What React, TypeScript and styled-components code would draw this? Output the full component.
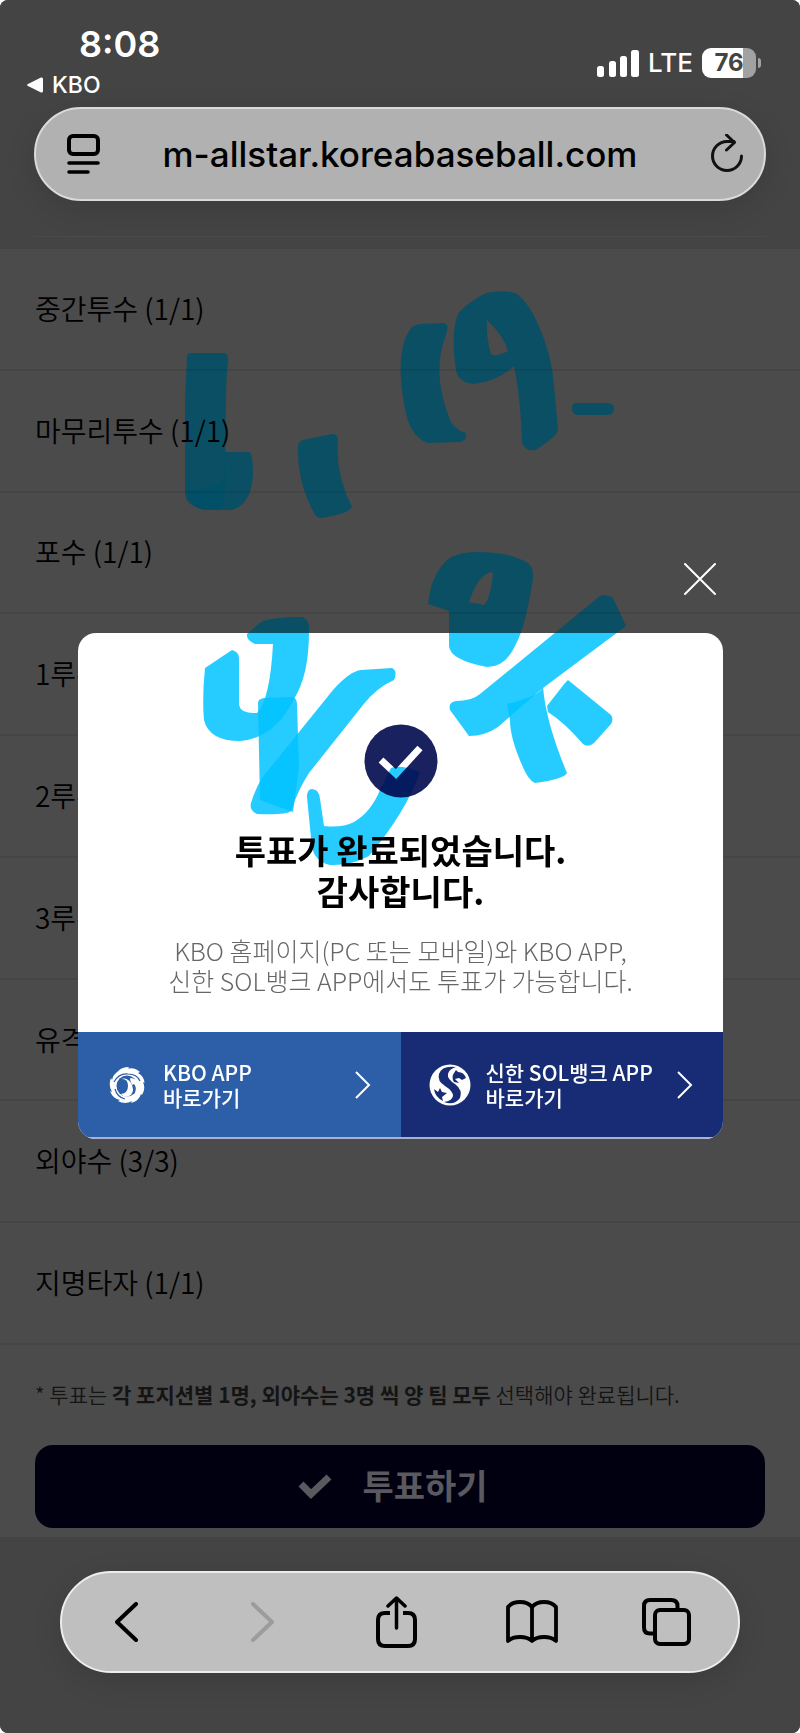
import React from 'react';
import styled, { createGlobalStyle } from 'styled-components';

const GlobalStyle = createGlobalStyle`
  *, *::before, *::after { box-sizing: border-box; }
  body { margin: 0; background: #fff; }
  button { margin: 0; padding: 0; border: 0; background: none; font: inherit; color: inherit; cursor: pointer; }
  a { color: inherit; text-decoration: none; }
  svg { display: block; flex: none; }
`;

const ui = `'Inter', 'Noto Sans CJK KR', sans-serif`;
const korean = `'Noto Sans CJK KR', sans-serif`;

const Screen = styled.div`
  position: relative;
  display: flex;
  flex-direction: column;
  min-height: 100vh;
  overflow: hidden;
  border-radius: 8px;
  background: #4b4b4b;
  font-family: ${korean};
`;

const Header = styled.header`
  display: flex;
  flex-direction: column;
  height: 249px;
  padding: 0 34px;
  background: #444;
  color: #fff;
  font-family: ${ui};
`;

const StatusBar = styled.div`
  display: flex;
  justify-content: space-between;
  height: 107px;
`;

const StatusLeft = styled.div`
  display: flex;
  flex-direction: column;
  padding-top: 24px;
`;

const Clock = styled.time`
  padding-left: 45px;
  font-size: 36px;
  line-height: 40px;
  font-weight: 600;
`;

const BackLink = styled.a`
  display: flex;
  align-items: center;
  gap: 9px;
  margin-left: -7px;
  font-size: 23px;
  line-height: 42px;
  font-weight: 500;
`;

const StatusRight = styled.div`
  display: flex;
  align-items: center;
  gap: 9px;
  height: 38px;
  margin-top: 44px;
  padding-right: 5px;
`;

const Network = styled.span`
  font-size: 26px;
  line-height: 38px;
  font-weight: 500;
`;

const Battery = styled.div`
  display: flex;
  align-items: center;
  gap: 2px;
`;

const BatteryBody = styled.div`
  width: 54px;
  height: 30px;
  border-radius: 9px;
  background: linear-gradient(90deg, #fff 76%, #a2a2a2 76%);
  color: #444;
  font-size: 24px;
  line-height: 30px;
  font-weight: 700;
  text-align: center;
`;

const BatteryCap = styled.div`
  width: 3px;
  height: 10px;
  border-radius: 0 3px 3px 0;
  background: #a2a2a2;
`;

const AddressBar = styled.div`
  display: flex;
  align-items: center;
  height: 94px;
  border: 2px solid #dadada;
  border-radius: 47px;
  background: #b1b1b1;
  box-shadow: 0 8px 30px rgba(0, 0, 0, 0.12);
  color: #000;
`;

const AddressButton = styled.button<{ $width: number }>`
  display: grid;
  place-items: center;
  width: ${(p) => p.$width}px;
  height: 90px;
`;

const Address = styled.span`
  flex: 1;
  padding-right: 20px;
  font-size: 35px;
  line-height: 40px;
  font-weight: 500;
  text-align: center;
`;

const HeaderRule = styled.div`
  height: 1px;
  margin-top: 35px;
  background: #4a4a4a;
`;

const Positions = styled.ul`
  position: relative;
  z-index: 1;
  display: flex;
  flex: 1;
  flex-direction: column;
  margin: 0;
  padding: 0;
  list-style: none;
`;

const Position = styled.li`
  display: flex;
  flex: 1 0 100px;
  align-items: center;
  padding: 0 35px 2px;
  border-bottom: 2px solid rgba(0, 0, 0, 0.08);
  color: #000;
  font-size: 28px;
  line-height: 40px;
  font-weight: 350;
`;

const VoteArea = styled.section`
  padding: 33px 35px 9px;
`;

const Note = styled.p`
  margin: 0 0 35px;
  color: #141414;
  font-size: 21px;
  line-height: 32px;
  font-weight: 350;
  b { font-weight: 700; }
`;

const VoteButton = styled.button`
  display: flex;
  align-items: center;
  justify-content: center;
  gap: 30px;
  width: 100%;
  height: 83px;
  padding: 0 14px 4px 0;
  border-radius: 18px;
  background: #000010;
  color: #59595f;
  font-size: 34px;
  line-height: 40px;
  font-weight: 700;
`;

const BrowserBar = styled.nav`
  padding: 34px 60px 60px;
  background: #444;
`;

const BrowserPill = styled.div`
  display: flex;
  align-items: center;
  justify-content: space-between;
  height: 102px;
  padding: 0 36px 0 30px;
  border: 2px solid #ededed;
  border-radius: 51px;
  background: #bfbfbf;
  box-shadow: 0 8px 30px rgba(0, 0, 0, 0.12);
`;

const BarButton = styled.button`
  display: grid;
  place-items: center;
  width: 70px;
  height: 70px;
`;

const Overlay = styled.div`
  position: absolute;
  inset: 0;
  z-index: 2;
  display: flex;
  flex-direction: column;
  align-items: center;
  padding: 554px 77px 0 78px;
`;

const Dialog = styled.div`
  display: flex;
  flex-direction: column;
  width: 100%;
  max-width: 645px;
`;

const CloseButton = styled.button`
  display: grid;
  place-items: center;
  align-self: flex-end;
  width: 46px;
  height: 50px;
  margin-bottom: 29px;
`;

const Card = styled.div`
  position: relative;
  overflow: hidden;
  border-radius: 18px;
  background: #fff;
  isolation: isolate;
`;

const CardBody = styled.div`
  display: flex;
  flex-direction: column;
  align-items: center;
  height: 399px;
  padding-top: 91px;
  text-align: center;
`;

const Title = styled.h1`
  margin: 31px 0 0;
  color: #000;
  font-size: 34px;
  line-height: 41px;
  font-weight: 700;
`;

const Message = styled.p`
  margin: 24px 0 0;
  color: #666;
  font-size: 25px;
  line-height: 30px;
  font-weight: 300;
`;

const Actions = styled.div`
  display: grid;
  grid-template-columns: 1fr 1fr;
  border-bottom: 2px solid #a8b2cc;
`;

const Action = styled.a<{ $tone: string }>`
  display: flex;
  align-items: center;
  height: 105px;
  padding: 0 30px 0 28px;
  background: ${(p) => p.$tone};
  color: #fff;
  font-size: 21px;
  line-height: 25px;
  font-weight: 500;
`;

const LogoSlot = styled.span`
  display: grid;
  place-items: center;
  width: 42px;
`;

const ActionLabel = styled.span`
  flex: 1;
  padding-left: 15px;
  white-space: nowrap;
`;

const PageInk = styled.svg`
  position: absolute;
  top: 0;
  left: 0;
  width: 100%;
  height: auto;
  pointer-events: none;
`;

const CardInk = styled.svg`
  position: absolute;
  top: 0;
  left: 0;
  width: 100%;
  height: auto;
  pointer-events: none;
  mix-blend-mode: multiply;
`;

/* Marker strokes, each one a filled outline in the coordinates of the 800-wide page. */
const upperInk = [
  'M187 357Q187 353 191 353L224 353Q228 353 228 359Q226 380 226 400L225 470Q226 509 218 509L203 509Q185 506 185 492L185 400Z',
  'M187 490Q190 508 204 510L232 510Q251 505 253 475Q253 452 249 452L225 452L224 480Q210 490 187 490Z',
  'M298 446Q298 442 303 440L332 434Q338 434 338 440Q335 473 352 507Q350 513 322 518Q316 518 314 513Q297 482 298 446Z',
  'M411 328Q414 325 420 324L443 323Q450 323 446 335Q431 372 450 420Q455 430 466 433Q468 440 460 442L428 443Q412 438 406 414Q393 352 411 328Z',
  'M486 293Q506 289 517 294Q528 302 538 324Q552 355 554 385L558 430Q557 436 536 450Q526 452 522 443Q521 400 514 366Q497 382 473 384Q458 382 456 370Q450 330 459 312Q473 299 486 293ZM487 320Q486 337 491 354Q494 358 508 351Q504 336 487 320Z',
  'M575 403L609 403Q614 404 614 409Q614 414 608 415L577 415Q572 414 572 409Q572 404 575 403Z',
];

const lowerInk = [
  'M428 604Q431 575 447 560Q457 552 477 552Q509 552 528 563Q534 568 533 578Q526 625 516 644Q506 667 487 667Q450 660 449 646L449 611ZM493 572Q479 572 469 602L484 605Q491 598 493 572Z',
  'M600 596Q606 593 613 598L626 626L543 688Q515 712 498 727Q485 736 469 736L450 710Q448 702 456 701Q472 701 480 694Z',
  'M507 704Q540 696 543 687Q546 723 567 773Q564 779 535 783Q528 780 522 765Q510 738 510 720Z',
  'M568 680L611 715Q614 719 611 724L594 743Q588 748 583 744Q565 723 548 712L547 706L565 683Z',
  'M261 622Q272 617 302 617Q310 619 309 632Q309 675 294 699Q275 738 240 741Q209 741 204 720Q202 697 205 668L232 650Q239 652 239 658L239 705Q241 714 257 713Q270 700 273 644L255 644Q246 640 247 634Z',
  'M258 703Q258 699 264 698L292 697Q297 698 297 704L299 768L293 812L260 800Z',
  'M361 670L392 668Q398 671 394 680Q376 688 363 705L309 773Q298 790 291 811Q287 815 257 814Q249 810 251 803Q258 780 270 768L333 690Q350 671 361 670Z',
  'M312 789Q319 789 320 799L324 826Q342 828 354 822Q371 812 380 790L391 768Q400 764 420 772Q406 812 369 856Q350 866 330 865Q311 861 311 838L307 797Q307 789 312 789Z',
];

function InkPaths({ color, paths }: { color: string; paths: string[] }) {
  return (
    <g fill={color} fillOpacity={0.85} fillRule="evenodd">
      {paths.map((d) => (
        <path key={d} d={d} />
      ))}
    </g>
  );
}

function PageMarker() {
  return (
    <PageInk viewBox="0 0 800 1733" aria-hidden="true">
      <InkPaths color="#005068" paths={[...upperInk, ...lowerInk]} />
    </PageInk>
  );
}

function CardMarker() {
  return (
    <CardInk viewBox="78 633 645 506" aria-hidden="true">
      <InkPaths color="#00c3ff" paths={lowerInk} />
    </CardInk>
  );
}

function ReaderIcon() {
  return (
    <svg width="34" height="40" viewBox="0 0 34 40" fill="none" stroke="#000" strokeWidth="4" strokeLinecap="round">
      <rect x="2" y="2" width="29" height="18" rx="4" />
      <path d="M2 29h29M2 38h19" strokeWidth="3.6" />
    </svg>
  );
}

function ReloadIcon() {
  return (
    <svg width="32" height="40" viewBox="0 0 32 40" fill="none" stroke="#111" strokeWidth="3" strokeLinecap="round" strokeLinejoin="round">
      <path d="M30.500 22A14.500 14.500 0 1 1 16 7.500H23" />
      <path d="M15.500 1l8 7.500-8 7.500" />
    </svg>
  );
}

function SignalIcon() {
  return (
    <svg width="42" height="27" viewBox="0 0 42 27" fill="#fff">
      <rect x="0" y="16" width="7" height="11" rx="2.500" />
      <rect x="12" y="11" width="7" height="16" rx="2.500" />
      <rect x="23" y="6" width="7" height="21" rx="2.500" />
      <rect x="34" y="0" width="8" height="27" rx="2.500" />
    </svg>
  );
}

function KboLogo() {
  return (
    <svg width="38" height="38" viewBox="0 0 38 38" fill="#fff">
      <path d="M10 5Q14 1 21 1L20 2.500Q27 1 32 6L30 7Q36 10 36.500 17L35 16Q38 23 34 29L33 28Q31 35 23 37L24 35Q17 39 10 35L12 34Q5 33 2 25L4 26Q0 19 3 12L4 14Q5 8 12 4Z" />
      <circle cx="19" cy="20" r="10.500" fill="#2d5fa8" />
      <path d="M13 13Q20 12 20 20Q20 27 13 28Q17 33 23 29Q27 24 23 17Q19 11 13 13Z" />
      <path d="M22 12Q30 12 30 20Q30 25 27 27Q29 21 26 18L24 19Q22 15 22 12Z" />
      <path d="M6 16Q11 7 20 8Q29 8 32 15" fill="none" stroke="#2d5fa8" strokeWidth="1.200" />
      <path d="M7 23Q9 31 17 33" fill="none" stroke="#2d5fa8" strokeWidth="1.200" />
    </svg>
  );
}

function ShinhanLogo() {
  return (
    <svg width="42" height="42" viewBox="0 0 42 42" fill="#172c75">
      <circle cx="21" cy="21" r="20.500" fill="#fff" />
      <path d="M27 3Q13 1 10 10Q8 17 16 22Q24 27 24 32Q23 37 15 38Q25 42 31 34Q34 26 26 20Q18 15 19 10Q20 5 27 3Z" />
      <path d="M25 9L27 6L29 8Q35 8 37 14L33 16L30 14L26 15L30 19L25 18Q22 13 25 9Z" />
      <path d="M5 25L9 28L11 24L13 28L18 29L13 33L14 37Q6 33 5 25Z" />
    </svg>
  );
}

function Chevron() {
  return (
    <svg width="16" height="28" viewBox="0 0 16 28" fill="none" stroke="#fff" strokeWidth="2">
      <path d="M1 1l13 13L1 27" />
    </svg>
  );
}

const positions = [
  '중간투수 (1/1)',
  '마무리투수 (1/1)',
  '포수 (1/1)',
  '1루수 (1/1)',
  '2루수 (1/1)',
  '3루수 (1/1)',
  '유격수 (1/1)',
  '외야수 (3/3)',
  '지명타자 (1/1)',
];

export default function App() {
  return (
    <>
      <GlobalStyle />
      <Screen>
        <Header>
          <StatusBar>
            <StatusLeft>
              <Clock>8:08</Clock>
              <BackLink href="#kbo">
                <svg width="16" height="16" viewBox="0 0 16 16" fill="#fff">
                  <path d="M1 7L14 .5Q16 0 16 2V14Q16 16 14 15.500L1 9Q-1 8 1 7Z" />
                </svg>
                KBO
              </BackLink>
            </StatusLeft>
            <StatusRight>
              <SignalIcon />
              <Network>LTE</Network>
              <Battery>
                <BatteryBody>76</BatteryBody>
                <BatteryCap />
              </Battery>
            </StatusRight>
          </StatusBar>
          <AddressBar>
            <AddressButton $width={95} aria-label="Page menu"><ReaderIcon /></AddressButton>
            <Address>m-allstar.koreabaseball.com</Address>
            <AddressButton $width={75} aria-label="Reload"><ReloadIcon /></AddressButton>
          </AddressBar>
          <HeaderRule />
        </Header>

        <PageMarker />

        <Positions>
          {positions.map((label) => (
            <Position key={label}>{label}</Position>
          ))}
        </Positions>

        <VoteArea>
          <Note>
            * 투표는 <b>각 포지션별 1명, 외야수는 3명 씩 양 팀 모두</b> 선택해야 완료됩니다.
          </Note>
          <VoteButton>
            <svg width="34" height="30" viewBox="0 -4 34 30" fill="none" stroke="#59595f" strokeWidth="7">
              <path d="M3 10l10 10L31 3" />
            </svg>
            투표하기
          </VoteButton>
        </VoteArea>

        <BrowserBar>
          <BrowserPill>
            <BarButton aria-label="Back">
              <svg width="24" height="40" viewBox="0 0 24 40" fill="none" stroke="#000" strokeWidth="4" strokeLinecap="round" strokeLinejoin="round">
                <path d="M21 2L2 20l19 18" />
              </svg>
            </BarButton>
            <BarButton aria-label="Forward">
              <svg width="24" height="40" viewBox="0 0 24 40" fill="none" stroke="#9c9c9c" strokeWidth="4" strokeLinecap="round" strokeLinejoin="round">
                <path d="M3 2l19 18L3 38" />
              </svg>
            </BarButton>
            <BarButton aria-label="Share">
              <svg width="42" height="52" viewBox="0 0 42 52" fill="none" stroke="#000" strokeWidth="4" strokeLinecap="round" strokeLinejoin="round">
                <path d="M14 17H9Q2 17 2 24V43Q2 50 9 50H32Q39 50 39 43V24Q39 17 32 17H27" strokeLinecap="butt" />
                <path d="M20.500 32V2M12 10l8.500-8 8.500 8" strokeWidth="3.500" />
              </svg>
            </BarButton>
            <BarButton aria-label="Bookmarks">
              <svg width="52" height="44" viewBox="0 0 52 44" fill="none" stroke="#000" strokeWidth="3.800" strokeLinejoin="round">
                <path d="M26 7Q22 2 14 2Q6 2 2 7V41Q6 37 14 37Q22 37 26 41Q30 37 38 37Q46 37 50 41V7Q46 2 38 2Q30 2 26 7V41" />
              </svg>
            </BarButton>
            <BarButton aria-label="Tabs">
              <svg width="50" height="48" viewBox="0 0 50 48" fill="none" stroke="#000" strokeWidth="4">
                <rect x="13" y="12" width="34" height="34" rx="5" />
                <path d="M13 35.500H8Q2 35.500 2 29.500V8Q2 2 8 2H29Q35.500 2 35.500 8V12" />
              </svg>
            </BarButton>
          </BrowserPill>
        </BrowserBar>

        <Overlay>
          <Dialog role="dialog" aria-modal="true" aria-labelledby="vote-title">
            <CloseButton aria-label="Close">
              <svg width="32" height="32" viewBox="0 0 32 32" stroke="#fff" strokeWidth="2" strokeLinecap="round">
                <path d="M1 1l30 30M31 1L1 31" />
              </svg>
            </CloseButton>
            <Card>
              <CardBody>
                <svg width="74" height="74" viewBox="0 0 74 74">
                  <circle cx="37" cy="37" r="36.500" fill="#19215f" />
                  <path d="M17 36l15 14 24-26" fill="none" stroke="#fff" strokeWidth="7" />
                </svg>
                <Title id="vote-title">
                  투표가 완료되었습니다.
                  <br />
                  감사합니다.
                </Title>
                <Message>
                  KBO 홈페이지(PC 또는 모바일)와 KBO APP,
                  <br />
                  신한 SOL뱅크 APP에서도 투표가 가능합니다.
                </Message>
              </CardBody>
              <Actions>
                <Action href="#kbo-app" $tone="#2d5fa8">
                  <LogoSlot><KboLogo /></LogoSlot>
                  <ActionLabel>
                    KBO APP
                    <br />
                    바로가기
                  </ActionLabel>
                  <Chevron />
                </Action>
                <Action href="#sol-app" $tone="#172c75">
                  <LogoSlot><ShinhanLogo /></LogoSlot>
                  <ActionLabel>
                    신한 SOL뱅크 APP
                    <br />
                    바로가기
                  </ActionLabel>
                  <Chevron />
                </Action>
              </Actions>
              <CardMarker />
            </Card>
          </Dialog>
        </Overlay>
      </Screen>
    </>
  );
}
